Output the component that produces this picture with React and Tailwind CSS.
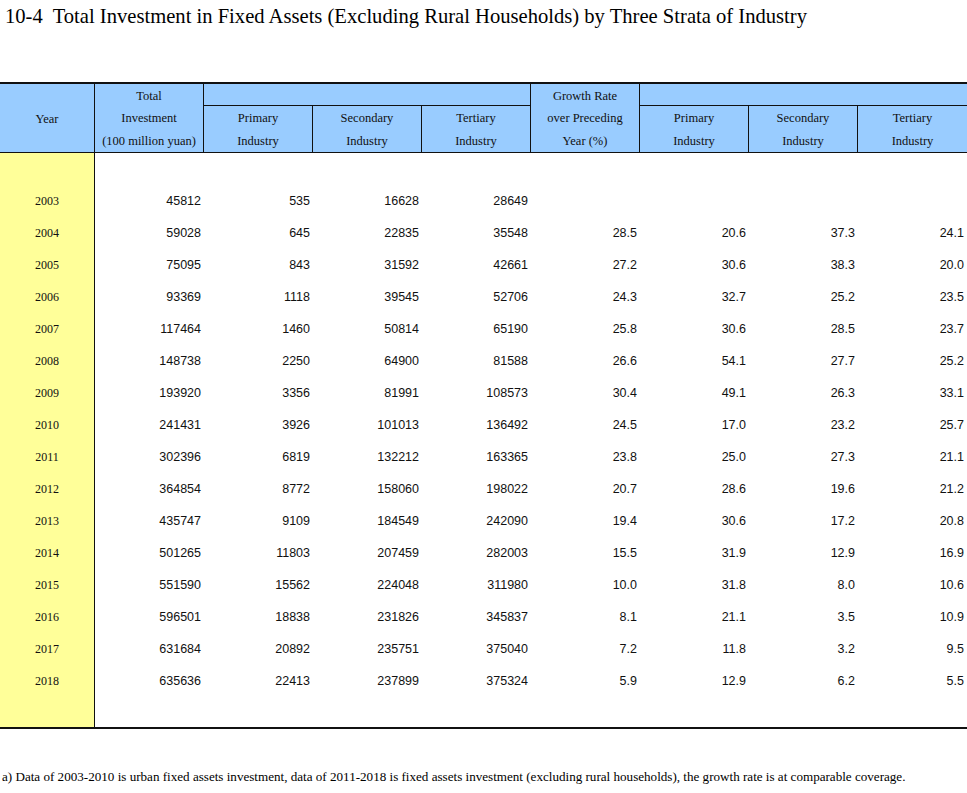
import React from "react";

const rows = [
  ["2003", "45812", "535", "16628", "28649", "", "", "", ""],
  ["2004", "59028", "645", "22835", "35548", "28.5", "20.6", "37.3", "24.1"],
  ["2005", "75095", "843", "31592", "42661", "27.2", "30.6", "38.3", "20.0"],
  ["2006", "93369", "1118", "39545", "52706", "24.3", "32.7", "25.2", "23.5"],
  ["2007", "117464", "1460", "50814", "65190", "25.8", "30.6", "28.5", "23.7"],
  ["2008", "148738", "2250", "64900", "81588", "26.6", "54.1", "27.7", "25.2"],
  ["2009", "193920", "3356", "81991", "108573", "30.4", "49.1", "26.3", "33.1"],
  ["2010", "241431", "3926", "101013", "136492", "24.5", "17.0", "23.2", "25.7"],
  ["2011", "302396", "6819", "132212", "163365", "23.8", "25.0", "27.3", "21.1"],
  ["2012", "364854", "8772", "158060", "198022", "20.7", "28.6", "19.6", "21.2"],
  ["2013", "435747", "9109", "184549", "242090", "19.4", "30.6", "17.2", "20.8"],
  ["2014", "501265", "11803", "207459", "282003", "15.5", "31.9", "12.9", "16.9"],
  ["2015", "551590", "15562", "224048", "311980", "10.0", "31.8", "8.0", "10.6"],
  ["2016", "596501", "18838", "231826", "345837", "8.1", "21.1", "3.5", "10.9"],
  ["2017", "631684", "20892", "235751", "375040", "7.2", "11.8", "3.2", "9.5"],
  ["2018", "635636", "22413", "237899", "375324", "5.9", "12.9", "6.2", "5.5"],
];

const serif = "font-['Liberation_Serif','Times_New_Roman',serif]";

export default function App() {
  return (
    <div className="w-[967px] bg-white text-black">
      <div
        className={`h-[82px] pt-[4px] pl-[5px] text-[20.6px] leading-[24px] whitespace-pre ${serif}`}
      >
        {"10-4  Total Investment in Fixed Assets (Excluding Rural Households) by Three Strata of Industry"}
      </div>

      <div
        className={`grid grid-cols-[95px_repeat(8,109px)] grid-rows-[22px_46px] border-t-2 border-b border-[#111] bg-[#99CCFF] text-[12.5px] text-[#111] ${serif}`}
      >
        <div className="col-start-1 row-span-2 row-start-1 flex items-center justify-center pt-[2px] border-r border-[#111]">
          Year
        </div>
        <div className="col-start-2 row-span-2 row-start-1 flex flex-col items-center pt-[1px] leading-[23px] border-r border-[#111]">
          <span className="h-[22px] leading-[22px]">Total</span>
          <span>Investment</span>
          <span>(100 million yuan)</span>
        </div>
        <div className="col-start-3 col-span-3 row-start-1 border-b border-r border-[#111]" />
        <div className="col-start-6 row-span-2 row-start-1 flex flex-col items-center pt-[1px] leading-[23px] border-r border-[#111]">
          <span className="h-[22px] leading-[22px]">Growth Rate</span>
          <span>over Preceding</span>
          <span>Year (%)</span>
        </div>
        <div className="col-start-7 col-span-3 row-start-1 border-b border-[#111]" />
        <div className="col-start-3 row-start-2 flex flex-col items-center justify-center pt-[2px] leading-[23px] border-r border-[#111]">
          <span>Primary</span>
          <span>Industry</span>
        </div>
        <div className="col-start-4 row-start-2 flex flex-col items-center justify-center pt-[2px] leading-[23px] border-r border-[#111]">
          <span>Secondary</span>
          <span>Industry</span>
        </div>
        <div className="col-start-5 row-start-2 flex flex-col items-center justify-center pt-[2px] leading-[23px] border-r border-[#111]">
          <span>Tertiary</span>
          <span>Industry</span>
        </div>
        <div className="col-start-7 row-start-2 flex flex-col items-center justify-center pt-[2px] leading-[23px] border-r border-[#111]">
          <span>Primary</span>
          <span>Industry</span>
        </div>
        <div className="col-start-8 row-start-2 flex flex-col items-center justify-center pt-[2px] leading-[23px] border-r border-[#111]">
          <span>Secondary</span>
          <span>Industry</span>
        </div>
        <div className="col-start-9 row-start-2 flex flex-col items-center justify-center pt-[2px] leading-[23px]">
          <span>Tertiary</span>
          <span>Industry</span>
        </div>
      </div>

      <div className="flex border-b-2 border-[#111]">
        <div
          className={`w-[95px] shrink-0 bg-[#FFFF99] border-r border-[#111] pt-[32px] pb-[30px] text-[12px] text-[#111] ${serif}`}
        >
          {rows.map((r) => (
            <div key={r[0]} className="h-[32px] flex items-center justify-center">
              {r[0]}
            </div>
          ))}
        </div>
        <div className="flex-1 pt-[32px] pb-[30px] font-['Liberation_Sans',Arial,sans-serif] text-[12.5px] text-[#111]">
          {rows.map((r) => (
            <div key={r[0]} className="grid grid-cols-[repeat(8,109px)] h-[32px] items-center">
              {r.slice(1).map((v, i) => (
                <div key={i} className="text-right pr-[3px]">
                  {v}
                </div>
              ))}
            </div>
          ))}
        </div>
      </div>

      <div
        className={`mt-[40px] pl-[2px] text-[13.1px] leading-[16px] whitespace-nowrap ${serif}`}
      >
        a) Data of 2003-2010 is urban fixed assets investment, data of 2011-2018 is fixed assets investment (excluding rural households), the growth rate is at comparable coverage.
      </div>
    </div>
  );
}
